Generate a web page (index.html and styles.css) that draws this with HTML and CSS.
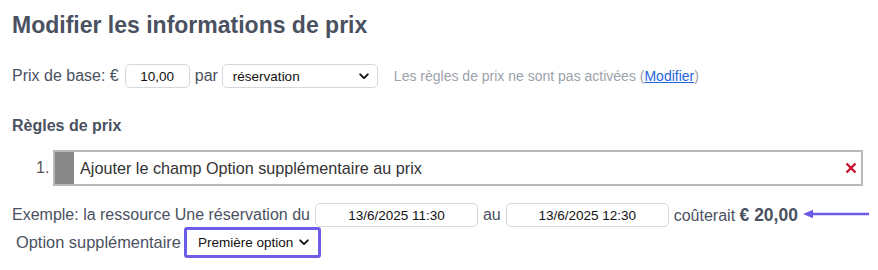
FILE: index.html
```html
<!DOCTYPE html>
<html lang="fr">
<head>
<meta charset="utf-8">
<title>Modifier les informations de prix</title>
<link rel="stylesheet" href="styles.css">
</head>
<body>
<div class="page">
  <h1 class="title">Modifier les informations de prix</h1>

  <div class="base-row">
    <span class="label">Prix de base: €</span>
    <input class="field price" type="text" value="10,00">
    <span class="label">par</span>
    <div class="select unit">
      <span class="select-text">réservation</span>
      <svg class="chev" width="10" height="7" viewBox="0 0 10 7"><path d="M1.2 1.3 L5 5.1 L8.8 1.3" fill="none" stroke="#111" stroke-width="1.9" stroke-linecap="round" stroke-linejoin="round"/></svg>
    </div>
    <span class="note">Les règles de prix ne sont pas activées (<a href="#" class="link">Modifier</a>)</span>
  </div>

  <h2 class="subtitle">Règles de prix</h2>

  <ol class="rules">
    <li class="rule">
      <span class="rule-num">1.</span>
      <div class="rule-box">
        <span class="rule-handle"></span>
        <span class="rule-text">Ajouter le champ Option supplémentaire au prix</span>
        <svg class="rule-del" width="12" height="12" viewBox="0 0 12 12"><path d="M1.5 1.5 L10.5 10.5 M10.5 1.5 L1.5 10.5" stroke="#c8102e" stroke-width="2.4" stroke-linecap="butt"/></svg>
      </div>
    </li>
  </ol>

  <div class="example-row">
    <span class="ex-label">Exemple: la ressource Une réservation du</span>
    <input class="field date" type="text" value="13/6/2025 11:30">
    <span class="ex-label">au</span>
    <input class="field date" type="text" value="13/6/2025 12:30">
    <span class="ex-label">coûterait <b class="total">€ 20,00</b></span>
    <svg class="arrow" width="66" height="10" viewBox="0 0 66 10"><path d="M66 5 H8" stroke="#6b5be6" stroke-width="2.4"/><path d="M0 5 L10 0.8 L10 9.2 Z" fill="#6b5be6"/></svg>
  </div>

  <div class="option-row">
    <span class="ex-label opt-label">Option supplémentaire</span>
    <div class="select option">
      <span class="select-text">Première option</span>
      <svg class="chev" width="10" height="7" viewBox="0 0 10 7"><path d="M1.2 1.3 L5 5.1 L8.8 1.3" fill="none" stroke="#111" stroke-width="1.9" stroke-linecap="round" stroke-linejoin="round"/></svg>
    </div>
  </div>
</div>
</body>
</html>
```
FILE: styles.css
```css
html, body {
  margin: 0;
  padding: 0;
  background: #ffffff;
}
body {
  font-family: "Liberation Sans", Arial, sans-serif;
  color: #4a5161;
}
.page {
  padding: 0 12px;
  position: relative;
}
.title {
  margin: 11px 0 0;
  font-size: 23px;
  line-height: 28px;
  font-weight: 700;
  color: #4a5161;
}
.base-row {
  display: flex;
  align-items: center;
  margin-top: 25px;
  height: 24px;
}
.label {
  font-size: 16px;
  color: #4a5161;
}
.field {
  box-sizing: border-box;
  height: 24px;
  border: 1px solid #d6d8db;
  border-radius: 5px;
  background: #fff;
  font-family: "Liberation Sans", Arial, sans-serif;
  font-size: 13.5px;
  color: #111;
  text-align: center;
  padding: 0 4px;
  outline: none;
}
.price {
  width: 65px;
  margin: 0 5px 0 6px;
}
.select {
  box-sizing: border-box;
  display: flex;
  align-items: center;
  justify-content: space-between;
  background: #fff;
  font-size: 13.5px;
  color: #111;
}
.unit {
  width: 156px;
  height: 24px;
  margin-left: 4px;
  padding: 0 8px 0 10px;
  border: 1px solid #d6d8db;
  border-radius: 5px;
}
.note {
  margin-left: 16px;
  font-size: 14px;
  color: #9ca2ab;
}
.link {
  color: #2563d9;
  text-decoration: underline;
}
.subtitle {
  margin: 29px 0 0;
  font-size: 16px;
  line-height: 18px;
  font-weight: 700;
  color: #4a5161;
}
.rules {
  list-style: none;
  margin: 15px 0 0;
  padding: 0;
}
.rule {
  display: flex;
  align-items: center;
}
.rule-num {
  width: 41px;
  box-sizing: border-box;
  padding-left: 24px;
  font-size: 16px;
  color: #555;
}
.rule-box {
  flex: 1;
  margin-right: 3px;
  height: 36px;
  box-sizing: border-box;
  border: 2px solid #b9b9b9;
  display: flex;
  align-items: center;
  background: #fff;
}
.rule-handle {
  align-self: stretch;
  width: 19px;
  background: #888888;
}
.rule-text {
  flex: 1;
  margin-left: 6px;
  font-size: 16.2px;
  color: #333;
}
.rule-del {
  margin-right: 4px;
}
.example-row {
  display: flex;
  align-items: center;
  margin-top: 17px;
  height: 24px;
  position: relative;
}
.ex-label {
  font-size: 16px;
  color: #4a5161;
}
.date {
  width: 163px;
  margin: 0 5px;
}
.total {
  font-weight: 700;
  font-size: 17.5px;
}
.arrow {
  position: absolute;
  left: 791px;
  top: 6px;
}
.option-row {
  display: flex;
  align-items: center;
  padding-left: 4px;
}
.opt-label {
  font-size: 16.4px;
}
.option {
  width: 137px;
  height: 31px;
  margin-left: 3px;
  padding: 0 9px 0 11px;
  border: 3px solid #6c5ce7;
  border-radius: 3px;
}
```
